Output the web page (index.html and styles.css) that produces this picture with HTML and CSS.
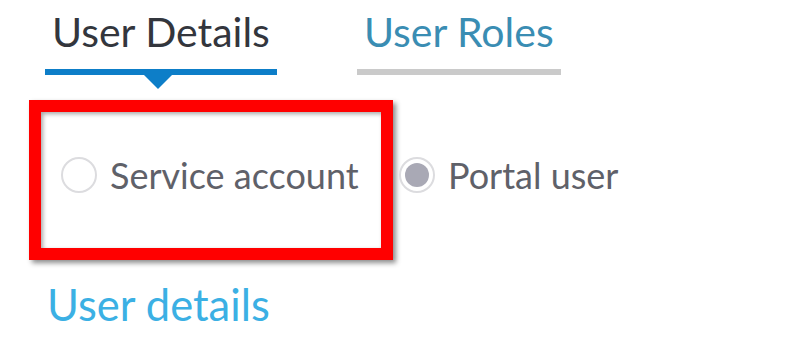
FILE: index.html
```html
<!DOCTYPE html>
<html lang="en">
<head>
<meta charset="UTF-8">
<meta name="viewport" content="width=device-width, initial-scale=1.0">
<title>User</title>
<link rel="stylesheet" href="styles.css">
</head>
<body>
<div class="page">

  <nav class="tabs">
    <a class="tab active" href="#">User Details</a>
    <a class="tab" href="#">User Roles</a>
  </nav>

  <div class="options">
    <div class="highlight">
      <label class="option">
        <span class="radio"></span>
        <span class="option-text">Service account</span>
      </label>
    </div>
    <label class="option">
      <span class="radio checked"></span>
      <span class="option-text">Portal user</span>
    </label>
  </div>

  <h2 class="section-title">User details</h2>

</div>
</body>
</html>
```

FILE: styles.css
```css
:root {
  --text: #33363d;
  --muted: #5f6169;
  --blue: #0d7ec8;
  --teal: #3a8db3;
  --sky: #3bb0e4;
  --line: #cacaca;
  --mark: #ff0000;
}

* { margin: 0; padding: 0; box-sizing: border-box; }

body {
  background: #fff;
  color: var(--text);
  font-family: Lato, 'Open Sans', sans-serif;
  overflow: hidden;
}

.page {
  padding: 7px 0 0;
}

/* Tabs */
.tabs {
  display: flex;
  gap: 80px;
  padding-left: 45px;
}

.tab {
  position: relative;
  display: block;
  padding: 0 7px 12px;
  font-size: 41px;
  line-height: 50px;
  color: var(--teal);
  text-decoration: none;
  border-bottom: 6px solid var(--line);
}

.tab.active {
  color: var(--text);
  border-bottom-color: var(--blue);
}

.tab.active::after {
  content: '';
  position: absolute;
  left: 99px;
  bottom: -20px;
  border-left: 14px solid transparent;
  border-right: 14px solid transparent;
  border-top: 14px solid var(--blue);
}

/* Radio options */
.options {
  display: flex;
  align-items: center;
  margin: 25px 0 0 29px;
}

.highlight {
  display: flex;
  align-items: center;
  width: 364px;
  height: 160px;
  padding: 0 0 10px 20px;
  border: 12px solid var(--mark);
  box-shadow: 3px 3px 5px rgba(0, 0, 0, 0.45), inset 2px 2px 4px rgba(0, 0, 0, 0.35);
}

.option {
  display: flex;
  align-items: center;
  gap: 13px;
  font-size: 36px;
  color: var(--muted);
}

.highlight + .option {
  margin-left: 6px;
  margin-bottom: 10px;
}

.radio {
  width: 36px;
  height: 36px;
  border: 2px solid #dcdcdf;
  border-radius: 50%;
  background: #fff;
  flex-shrink: 0;
  position: relative;
}

.radio.checked::after {
  content: '';
  position: absolute;
  inset: 4px;
  border-radius: 50%;
  background: #a9a9b5;
}

/* Section */
.section-title {
  margin: 19px 0 0 47px;
  font-size: 43.5px;
  font-weight: 400;
  line-height: 50px;
  color: var(--sky);
}
```
